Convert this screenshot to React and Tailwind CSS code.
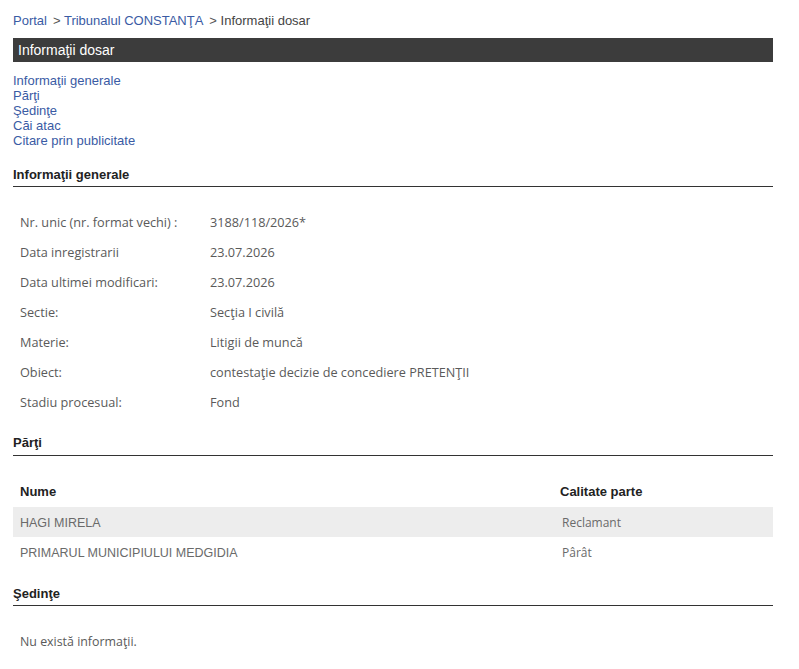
import React from "react";

const info = [
  ["Nr. unic (nr. format vechi) :", "3188/118/2026*"],
  ["Data inregistrarii", "23.07.2026"],
  ["Data ultimei modificari:", "23.07.2026"],
  ["Sectie:", "Secţia I civilă"],
  ["Materie:", "Litigii de muncă"],
  ["Obiect:", "contestaţie decizie de concediere PRETENŢII"],
  ["Stadiu procesual:", "Fond"],
];

const parti = [
  ["HAGI MIRELA", "Reclamant"],
  ["PRIMARUL MUNICIPIULUI MEDGIDIA", "Pârât"],
];

const links = [
  "Informaţii generale",
  "Părţi",
  "Şedinţe",
  "Căi atac",
  "Citare prin publicitate",
];

const SectionTitle = ({ children, className }) => (
  <div
    className={`border-b border-[#333] text-[13px] leading-[16px] font-bold text-[#222] ${className}`}
  >
    {children}
  </div>
);

export default function App() {
  return (
    <div className="w-[760px] mx-[13px] pt-[13px] font-['Liberation_Sans',Arial,sans-serif] bg-white min-h-[669px]">
      <div className="text-[13px] leading-[16px] text-[#555]">
        <a className="text-[#3a5ba4]">Portal</a>
        <span className="ml-[6px]">&gt; </span>
        <a className="text-[#3a5ba4]">Tribunalul CONSTANŢA</a>
        <span className="ml-[6px]">&gt; </span>
        <span className="text-[#444]">Informaţii dosar</span>
      </div>

      <div className="mt-[9px] h-[24px] bg-[#3c3c3c] px-[5px] text-[14px] leading-[24px] text-white">
        Informaţii dosar
      </div>

      <div className="mt-[11px] flex flex-col text-[13px] leading-[15px] text-[#3a5ba4]">
        {links.map((l) => (
          <a key={l}>{l}</a>
        ))}
      </div>

      <SectionTitle className="mt-[19px] pb-[3px]">Informaţii generale</SectionTitle>

      <div className="mt-[20px] font-['Open_Sans',sans-serif] text-[12.7px] text-[#5a5a5a]">
        {info.map(([k, v]) => (
          <div key={k} className="grid grid-cols-[197px_1fr] h-[30px] pt-[2px] items-center">
            <div className="pl-[7px]">{k}</div>
            <div>{v}</div>
          </div>
        ))}
      </div>

      <SectionTitle className="mt-[18px] pb-[4px]">Părţi</SectionTitle>

      <div className="mt-[21px]">
        <div className="grid grid-cols-[540px_1fr] h-[30px] items-center text-[13px] font-bold text-[#222]">
          <div className="pl-[7px]">Nume</div>
          <div className="pl-[7px]">Calitate parte</div>
        </div>
        {parti.map(([n, c], i) => (
          <div
            key={n}
            className={`grid grid-cols-[540px_1fr] h-[30px] pt-[2px] items-center text-[#6a6a6a] ${
              i === 0 ? "bg-[#ededed]" : ""
            }`}
          >
            <div className="pl-[7px] text-[12.5px]">{n}</div>
            <div className="pl-[9px] font-['Open_Sans',sans-serif] text-[12px]">{c}</div>
          </div>
        ))}
      </div>

      <SectionTitle className="mt-[19px] pb-[3px]">Şedinţe</SectionTitle>

      <div className="mt-[20px] h-[30px] pt-[2px] flex items-center pl-[7px] font-['Open_Sans',sans-serif] text-[12.4px] text-[#5a5a5a]">
        Nu există informaţii.
      </div>
    </div>
  );
}
